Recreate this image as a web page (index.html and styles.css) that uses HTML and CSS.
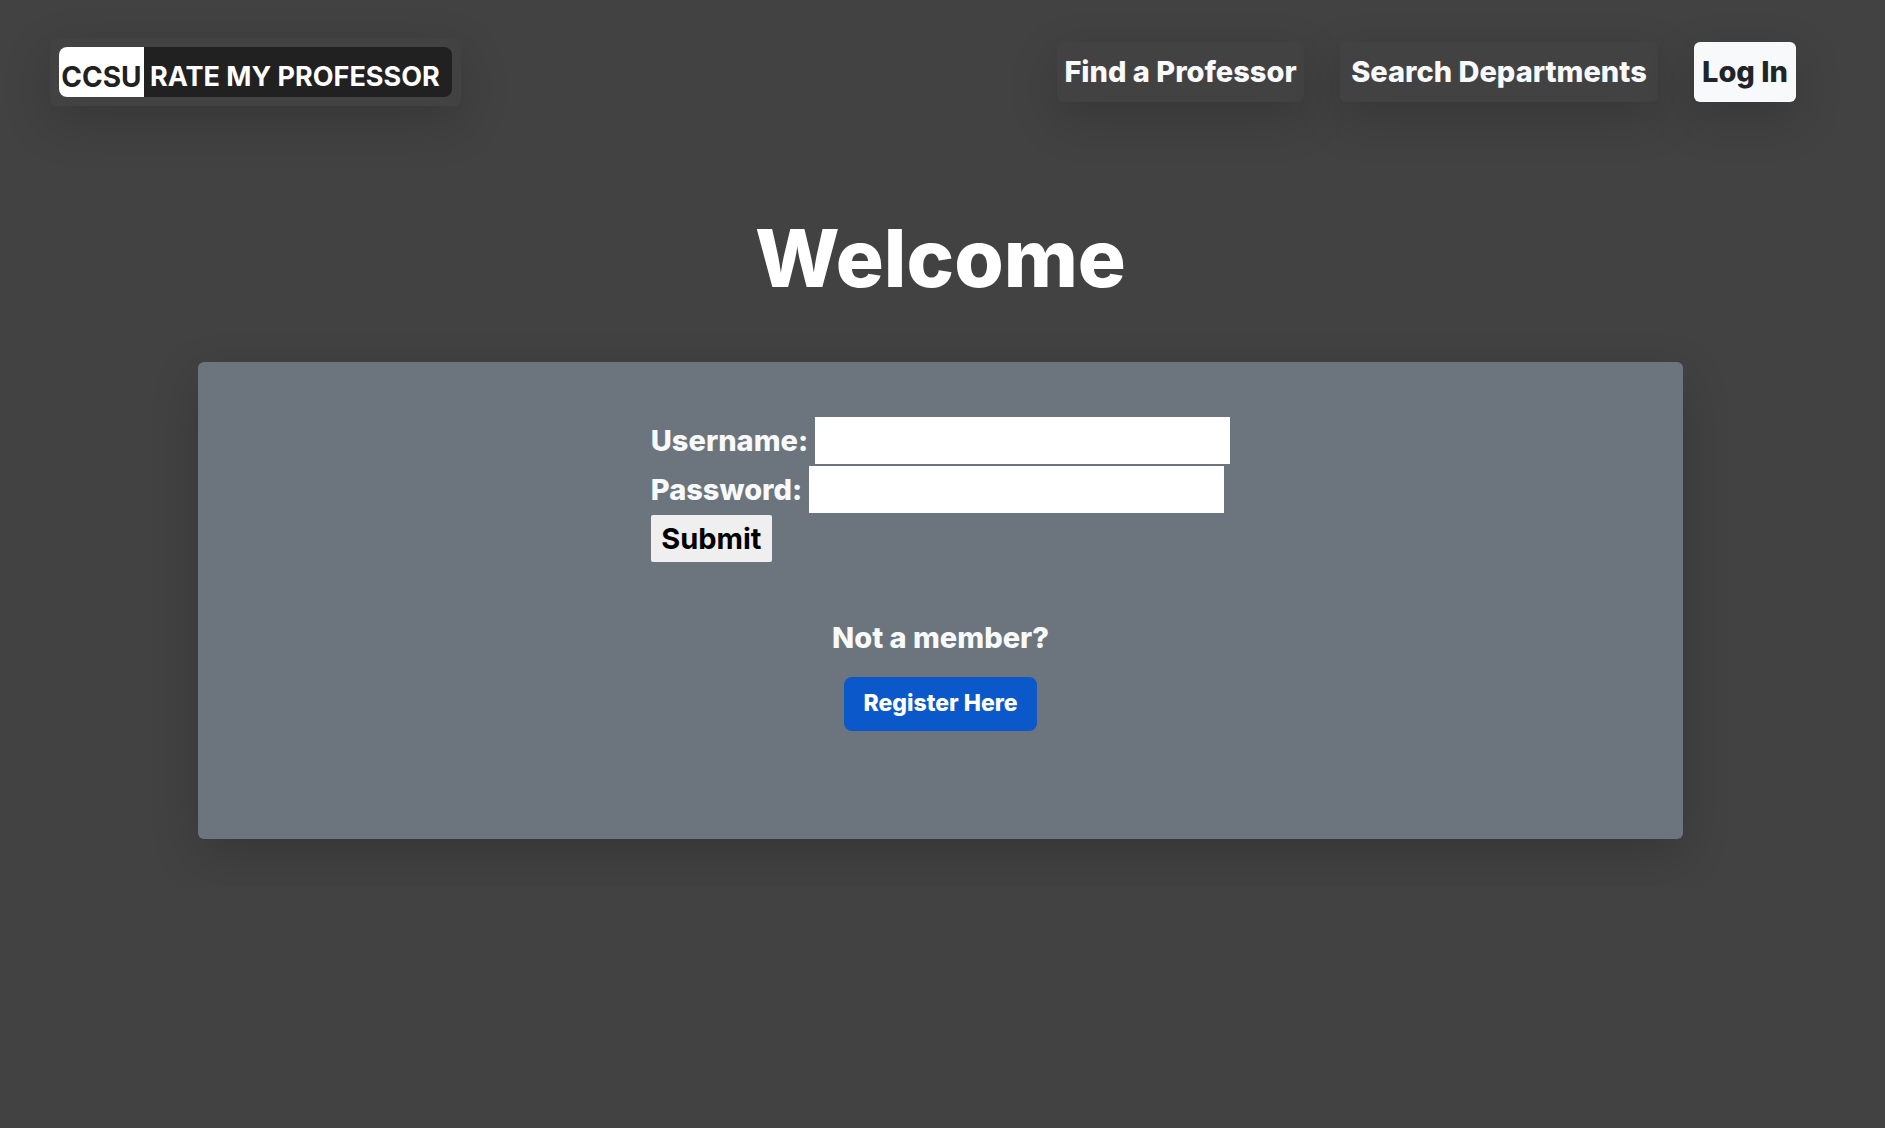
FILE: index.html
```html
<!DOCTYPE html>
<html lang="en">
<head>
  <meta charset="utf-8">
  <meta name="viewport" content="width=device-width, initial-scale=1">
  <title>CCSU Rate My Professor</title>
  <link rel="stylesheet" href="styles.css">
</head>
<body>
  <header class="navbar">
    <a class="brand raised" href="#"><span class="brand-logo"><span class="brand-school">CCSU</span><span class="brand-name">RATE MY PROFESSOR</span></span></a>
    <nav class="nav-links">
      <a class="nav-link nav-find raised" href="#">Find a Professor</a>
      <a class="nav-link nav-search raised" href="#">Search Departments</a>
      <a class="nav-link nav-login raised" href="#">Log In</a>
    </nav>
  </header>
  <main class="page">
    <h1 class="title">Welcome</h1>
    <section class="card raised">
      <form class="login">
        <div class="field"><label for="username">Username:</label><input id="username" type="text"></div>
        <div class="field"><label for="password">Password:</label><input id="password" type="password"></div>
        <button class="submit" type="submit">Submit</button>
      </form>
      <p class="prompt">Not a member?</p>
      <a class="register" href="#">Register Here</a>
    </section>
  </main>
</body>
</html>
```
FILE: styles.css
```css
* {
  box-sizing: border-box;
}

body {
  margin: 0;
  background: #424242;
  color: #f8f9fa;
  font: 800 29px/42px Inter, "Open Sans", sans-serif;
}

a {
  color: inherit;
  text-decoration: none;
}

.raised {
  border-radius: 6px;
  box-shadow: 0 16px 48px rgba(0, 0, 0, 0.175);
}

.navbar {
  display: flex;
  justify-content: space-between;
  align-items: center;
  padding: 38px 89px 0 50px;
}

.brand {
  padding: 9px;
  background: #424242;
}

.brand-logo {
  display: flex;
  height: 50px;
  overflow: hidden;
  border-radius: 8px;
  background: #212121;
  color: #fff;
  font-size: 27px;
  font-weight: 700;
  line-height: 60px;
}

.brand-school {
  width: 85px;
  background: #fff;
  color: #212121;
  font-size: 28px;
  text-align: center;
}

.brand-name {
  padding: 0 12px 0 6px;
}

.nav-links {
  display: flex;
  gap: 36px;
}

.nav-link {
  padding: 9px 0;
  background: #424242;
  text-align: center;
  white-space: nowrap;
}

.nav-find {
  min-width: 247px;
}

.nav-search {
  min-width: 318px;
}

.nav-login {
  min-width: 102px;
  background: #f8f9fa;
  color: #212529;
}

.page {
  padding: 92px 202px 48px 198px;
}

.title {
  margin: 0 0 44px;
  color: #fff;
  font-size: 80px;
  font-weight: 800;
  line-height: 120px;
  text-align: center;
}

.card {
  display: flex;
  flex-direction: column;
  align-items: center;
  padding: 55px 48px 108px;
  background: #6c757d;
}

.login {
  display: flex;
  flex-direction: column;
  align-items: flex-start;
  gap: 2px;
}

.field {
  display: flex;
  align-items: center;
  gap: 7px;
}

.field input {
  width: 415px;
  height: 47px;
  padding: 2px 4px;
  border: 0;
  background: #fff;
  font: inherit;
}

.submit {
  min-width: 121px;
  height: 47px;
  padding: 0 8px;
  border: 0;
  border-radius: 2px;
  background: #efefef;
  color: #000;
  font: inherit;
  font-weight: 700;
}

.prompt {
  margin: 55px 0 18px;
}

.register {
  min-width: 193px;
  padding: 8px 16px 10px;
  border-radius: 8px;
  background: #0a58ca;
  color: #fff;
  font-size: 23px;
  line-height: 36px;
  text-align: center;
}
```
